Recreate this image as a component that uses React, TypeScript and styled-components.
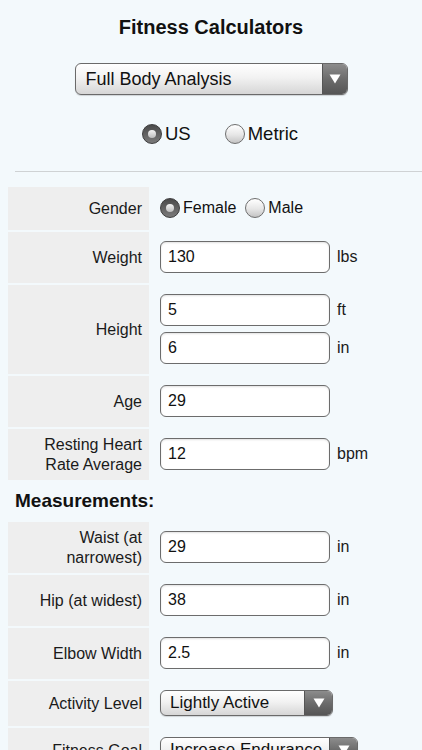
import React from "react";
import styled, { createGlobalStyle } from "styled-components";

const Global = createGlobalStyle`
  html, body { margin: 0; padding: 0; }
  body {
    background: #f3f9fc;
    font-family: "Liberation Sans", Arial, sans-serif;
    color: #111;
  }
`;

const Page = styled.div`
  width: 422px;
  display: flex;
  flex-direction: column;
  padding-top: 15px;
`;

const Title = styled.h1`
  margin: 0;
  font-size: 20px;
  line-height: 24px;
  font-weight: bold;
  text-align: center;
  color: #111;
`;

const SelectBox = styled.div<{ $w: number; $h: number; $fs: number; $pad: number; $arrow: number }>`
  width: ${(p) => p.$w}px;
  height: ${(p) => p.$h}px;
  box-sizing: border-box;
  border: 1px solid #6a6a6a;
  border-radius: 6px;
  background: linear-gradient(#ffffff 0%, #f2f2f2 45%, #d6d6d6 100%);
  display: flex;
  align-items: stretch;
  overflow: hidden;
  font-size: ${(p) => p.$fs}px;
  box-shadow: 0 1px 1px rgba(0, 0, 0, 0.15);
  span.txt {
    flex: 1;
    display: flex;
    align-items: center;
    padding-left: ${(p) => p.$pad}px;
    white-space: nowrap;
    overflow: hidden;
  }
  span.arrow {
    width: ${(p) => p.$arrow}px;
    display: flex;
    align-items: center;
    justify-content: center;
    background: linear-gradient(#8c8c8c 0%, #6c6c6c 50%, #555 100%);
    border-left: 1px solid #555;
  }
`;

const MainSelectWrap = styled.div`
  margin-top: 24px;
  display: flex;
  justify-content: center;
`;

const UnitRow = styled.div`
  margin-top: 27px;
  height: 24px;
  display: flex;
  align-items: center;
  padding-left: 142px;
  gap: 34px;
`;

const RadioLabel = styled.label<{ $fs: number }>`
  display: flex;
  align-items: center;
  gap: 3px;
  font-size: ${(p) => p.$fs}px;
  color: #111;
`;

const RadioDot = styled.span<{ $on: boolean }>`
  width: 20px;
  height: 20px;
  border-radius: 50%;
  box-sizing: border-box;
  display: inline-flex;
  align-items: center;
  justify-content: center;
  border: 1px solid ${(p) => (p.$on ? "#3c3c3c" : "#6e6e6e")};
  background: ${(p) =>
    p.$on
      ? "linear-gradient(#4a4a4a, #7a7a7a)"
      : "linear-gradient(#ffffff, #e6e6e6 55%, #c4c4c4)"};
  &::after {
    content: "";
    display: ${(p) => (p.$on ? "block" : "none")};
    width: 8px;
    height: 8px;
    border-radius: 50%;
    background: linear-gradient(#f4f4f4, #bdbdbd);
  }
`;

const Divider = styled.hr`
  margin: 25px 0 0 15px;
  border: 0;
  height: 1px;
  background: #cfd2d4;
`;

const Form = styled.div`
  margin-top: 15px;
  padding-left: 8px;
  display: flex;
  flex-direction: column;
  gap: 2px;
`;

const Row = styled.div`
  display: grid;
  grid-template-columns: 141px 1fr;
`;

const Label = styled.div`
  background: #eeeeee;
  display: flex;
  align-items: center;
  justify-content: flex-end;
  text-align: right;
  padding-right: 7px;
  font-size: 16px;
  line-height: 20px;
  color: #1a1a1a;
`;

const Field = styled.div`
  padding: 9px 0 10px 11px;
  display: flex;
  flex-direction: column;
  justify-content: center;
  gap: 6px;
`;

const Line = styled.div`
  display: flex;
  align-items: center;
  gap: 7px;
  font-size: 16px;
`;

const Input = styled.div`
  width: 170px;
  height: 32px;
  box-sizing: border-box;
  border: 1.5px solid #6c6c6c;
  border-radius: 6px;
  background: #fff;
  box-shadow: inset 0 1px 2px rgba(0, 0, 0, 0.12);
  display: flex;
  align-items: center;
  padding-left: 7px;
  font-size: 16px;
  color: #111;
`;

const Unit = styled.span`
  font-size: 16px;
  color: #1a1a1a;
`;

const GenderGroup = styled.div`
  display: flex;
  align-items: center;
  gap: 9px;
  height: 24px;
`;

const Heading = styled.h2`
  margin: 0;
  height: 38px;
  line-height: 38px;
  font-size: 19px;
  font-weight: bold;
  padding-left: 7px;
  color: #111;
`;

const Arrow = () => (
  <svg width="12" height="10" viewBox="0 0 12 10">
    <path d="M0.5 0.5 H11.5 L6 9.5 Z" fill="#fff" />
  </svg>
);

const Select = ({ text, w, h, fs, pad, arrow }: { text: string; w: number; h: number; fs: number; pad: number; arrow: number }) => (
  <SelectBox $w={w} $h={h} $fs={fs} $pad={pad} $arrow={arrow}>
    <span className="txt">{text}</span>
    <span className="arrow">
      <Arrow />
    </span>
  </SelectBox>
);

const Radio = ({ on, text, fs }: { on: boolean; text: string; fs: number }) => (
  <RadioLabel $fs={fs}>
    <RadioDot $on={on} />
    {text}
  </RadioLabel>
);

const InputLine = ({ value, unit }: { value: string; unit?: string }) => (
  <Line>
    <Input>{value}</Input>
    {unit && <Unit>{unit}</Unit>}
  </Line>
);

export default function App() {
  return (
    <>
      <Global />
      <Page>
        <Title>Fitness Calculators</Title>
        <MainSelectWrap>
          <Select text="Full Body Analysis" w={273} h={32} fs={18} pad={10} arrow={24} />
        </MainSelectWrap>
        <UnitRow>
          <Radio on text="US" fs={18.5} />
          <Radio on={false} text="Metric" fs={18.5} />
        </UnitRow>
        <Divider />
        <Form>
          <Row>
            <Label>Gender</Label>
            <Field>
              <GenderGroup>
                <Radio on text="Female" fs={16} />
                <Radio on={false} text="Male" fs={16} />
              </GenderGroup>
            </Field>
          </Row>
          <Row>
            <Label>Weight</Label>
            <Field>
              <InputLine value="130" unit="lbs" />
            </Field>
          </Row>
          <Row>
            <Label>Height</Label>
            <Field>
              <InputLine value="5" unit="ft" />
              <InputLine value="6" unit="in" />
            </Field>
          </Row>
          <Row>
            <Label>Age</Label>
            <Field>
              <InputLine value="29" />
            </Field>
          </Row>
          <Row>
            <Label>
              Resting Heart
              <br />
              Rate Average
            </Label>
            <Field>
              <InputLine value="12" unit="bpm" />
            </Field>
          </Row>
          <Heading>Measurements:</Heading>
          <Row>
            <Label>
              Waist (at
              <br />
              narrowest)
            </Label>
            <Field>
              <InputLine value="29" unit="in" />
            </Field>
          </Row>
          <Row>
            <Label>Hip (at widest)</Label>
            <Field>
              <InputLine value="38" unit="in" />
            </Field>
          </Row>
          <Row>
            <Label>Elbow Width</Label>
            <Field>
              <InputLine value="2.5" unit="in" />
            </Field>
          </Row>
          <Row>
            <Label>Activity Level</Label>
            <Field>
              <Select text="Lightly Active" w={173} h={26} fs={17} pad={9} arrow={27} />
            </Field>
          </Row>
          <Row>
            <Label>Fitness Goal</Label>
            <Field>
              <Select text="Increase Endurance" w={198} h={26} fs={17} pad={9} arrow={27} />
            </Field>
          </Row>
        </Form>
      </Page>
    </>
  );
}
